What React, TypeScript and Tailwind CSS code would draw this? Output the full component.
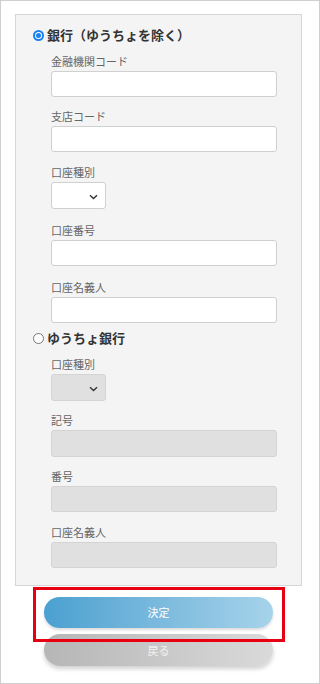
import React from "react";

const font = { fontFamily: '"Noto Sans CJK JP", "Noto Sans", sans-serif' };

function Chevron() {
    return (
        <svg width="9" height="6" viewBox="0 0 9 6" className="absolute right-[7px] top-[11px]">
            <path d="M1 1.2 L4.5 4.6 L8 1.2" fill="none" stroke="#333" strokeWidth="1.4" />
        </svg>
    );
}

function Radio({ checked, label, className }: { checked?: boolean; label: string; className: string }) {
    return (
        <div className={`flex items-center h-[18px] ml-[17px] ${className}`}>
            {checked ? (
                <span className="w-[11px] h-[11px] rounded-full bg-[#1a7ff0] flex items-center justify-center">
                    <span className="w-[7px] h-[7px] rounded-full bg-white flex items-center justify-center">
                        <span className="w-[5px] h-[5px] rounded-full bg-[#1a7ff0]" />
                    </span>
                </span>
            ) : (
                <span className="w-[11px] h-[11px] rounded-full border border-[#777] bg-white" />
            )}
            <span className="ml-[3px] text-[13px] font-bold text-[#333] leading-[18px]">{label}</span>
        </div>
    );
}

function Label({ text, className }: { text: string; className: string }) {
    return <div className={`ml-[35px] h-[16px] text-[11px] leading-[16px] text-[#666] ${className}`}>{text}</div>;
}

function Input({ disabled, h }: { disabled?: boolean; h: string }) {
    return (
        <div
            className={`ml-[35px] w-[226px] ${h} mt-[2px] rounded-[3px] border ${
                disabled ? "border-[#d4d4d4] bg-[#e0e0e0]" : "border-[#d0d0d0] bg-white"
            }`}
        />
    );
}

function Select({ disabled }: { disabled?: boolean }) {
    return (
        <div
            className={`relative ml-[35px] w-[55px] h-[27px] mt-[2px] rounded-[3px] border ${
                disabled ? "border-[#d4d4d4] bg-[#e0e0e0]" : "border-[#d0d0d0] bg-white"
            }`}
        >
            <Chevron />
        </div>
    );
}

export default function App() {
    return (
        <div style={font} className="relative w-[320px] h-[684px] border border-[#cfcfcf] bg-white overflow-hidden">
            {/* form panel */}
            <div className="mt-[13px] ml-[14px] w-[287px] border border-[#d6d6d6] bg-[#f4f4f4] pt-[11px] pb-[17px]">
                <Radio checked label="銀行（ゆうちょを除く）" className="" />
                <Label text="金融機関コード" className="mt-[9px]" />
                <Input h="h-[26px]" />
                <Label text="支店コード" className="mt-[11px]" />
                <Input h="h-[26px]" />
                <Label text="口座種別" className="mt-[12px]" />
                <Select />
                <Label text="口座番号" className="mt-[13px]" />
                <Input h="h-[26px]" />
                <Label text="口座名義人" className="mt-[13px]" />
                <Input h="h-[26px]" />

                <Radio label="ゆうちょ銀行" className="mt-[6px]" />
                <Label text="口座種別" className="mt-[9px]" />
                <Select disabled />
                <Label text="記号" className="mt-[11px]" />
                <Input disabled h="h-[27px]" />
                <Label text="番号" className="mt-[11px]" />
                <Input disabled h="h-[26px]" />
                <Label text="口座名義人" className="mt-[12px]" />
                <Input disabled h="h-[26px]" />
            </div>

            {/* buttons */}
            <div className="ml-[43px] w-[229px] mt-[11px] flex flex-col gap-[6px]">
                <button className="h-[31px] rounded-full bg-gradient-to-r from-[#4aa0d0] to-[#a6d3ea] text-white text-[11px] shadow-[0_2px_3px_rgba(0,0,0,0.15)]">
                    決定
                </button>
                <button className="h-[32px] rounded-full bg-gradient-to-r from-[#b6b6b6] to-[#dadada] text-[#f2f2f2] text-[11px] shadow-[0_3px_4px_rgba(0,0,0,0.18)]">
                    戻る
                </button>
            </div>

            {/* highlight annotation */}
            <div className="absolute left-[32px] top-[586px] w-[252px] h-[55px] border-[3px] border-[#e60012]" />
        </div>
    );
}
